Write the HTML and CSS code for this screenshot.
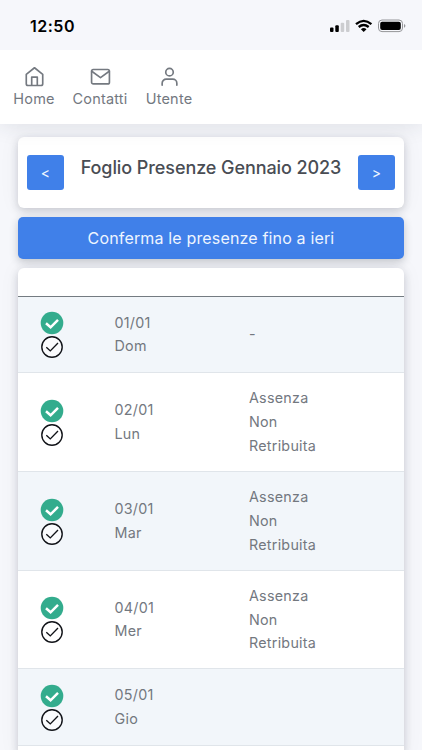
FILE: index.html
```
<!DOCTYPE html>
<html lang="it">
<head>
<meta charset="utf-8">
<meta name="viewport" content="width=device-width, initial-scale=1">
<title>Foglio Presenze</title>
<link rel="stylesheet" href="styles.css">
</head>
<body>
<svg class="defs" aria-hidden="true">
  <symbol id="done" viewBox="0 0 24 24"><circle cx="12" cy="12" r="11.3" fill="#33ac8d"/><path d="M6 12.300l4.600 4 7.400-7.400" fill="none" stroke="#fff" stroke-width="2.500"/></symbol>
  <symbol id="confirm" viewBox="0 0 24 24"><circle cx="12" cy="12" r="10.200" fill="#fff" fill-opacity=".6" stroke="#111318" stroke-width="1.400"/><path d="M6.300 12.200l4 3.700 7.700-7.800" fill="none" stroke="#111318" stroke-width="1.400"/></symbol>
</svg>
<div class="status">
  <span class="time">12:50</span>
  <svg class="signals" width="76" height="14" viewBox="0 0 76 14">
    <g fill="#000"><rect x="0" y="8.500" width="3.500" height="4.500" rx="1"/><rect x="5.300" y="6.300" width="3.500" height="6.700" rx="1"/></g>
    <g fill="#cccdd0"><rect x="10.700" y="3.700" width="3.500" height="9.300" rx="1"/><rect x="16" y="1" width="3.500" height="12" rx="1"/></g>
    <g fill="none" stroke="#000" stroke-width="2.300"><path d="M26 5.100Q33.700-1.400 41.400 5.100"/><path d="M28.700 8Q33.700 3.900 38.700 8"/></g>
    <path d="M30.900 10.200Q33.700 8 36.500 10.200L33.700 13z"/>
    <rect x="48.500" y="1" width="24" height="11.600" rx="3.500" fill="none" stroke="#949598"/>
    <rect x="50.200" y="2.700" width="20.600" height="8.200" rx="2"/>
    <path d="M74 5v3.700q1.400-.5 1.400-1.850T74 5z" fill="#949598"/>
  </svg>
</div>
<nav class="nav">
  <a class="nav-item home"><svg viewBox="0 0 24 24"><path d="M2.600 9.500 12 2l9.400 7.500V20.300a2 2 0 0 1-2 2H4.600a2 2 0 0 1-2-2zM8.800 22v-9.300h6.400V22"/></svg><span>Home</span></a>
  <a class="nav-item contatti"><svg viewBox="0 0 24 24"><rect x="1.800" y="4" width="20.400" height="16.500" rx="2"/><path d="M2 6 12 13.200 22 6"/></svg><span>Contatti</span></a>
  <a class="nav-item utente"><svg viewBox="0 0 24 24"><circle cx="12" cy="7" r="4.300"/><path d="M3.600 22v-2.300a4.700 4.700 0 0 1 4.700-4.700h7.400a4.700 4.700 0 0 1 4.700 4.700V22"/></svg><span>Utente</span></a>
</nav>
<main class="page">
  <section class="card month">
    <button class="step">&lt;</button>
    <h1><span>Foglio Presenze Gennaio 2023</span></h1>
    <button class="step">&gt;</button>
  </section>
  <button class="confirm"><span>Conferma le presenze fino a ieri</span></button>
  <section class="card days">
    <div class="head"></div>
    <div class="row short"><div class="icons"><svg><use href="#done"/></svg><svg><use href="#confirm"/></svg></div><div class="date">01/01<br>Dom</div><div class="kind">-</div></div>
    <div class="row"><div class="icons"><svg><use href="#done"/></svg><svg><use href="#confirm"/></svg></div><div class="date">02/01<br>Lun</div><div class="kind">Assenza<br>Non<br>Retribuita</div></div>
    <div class="row"><div class="icons"><svg><use href="#done"/></svg><svg><use href="#confirm"/></svg></div><div class="date">03/01<br>Mar</div><div class="kind">Assenza<br>Non<br>Retribuita</div></div>
    <div class="row"><div class="icons"><svg><use href="#done"/></svg><svg><use href="#confirm"/></svg></div><div class="date">04/01<br>Mer</div><div class="kind">Assenza<br>Non<br>Retribuita</div></div>
    <div class="row short"><div class="icons"><svg><use href="#done"/></svg><svg><use href="#confirm"/></svg></div><div class="date">05/01<br>Gio</div><div class="kind"></div></div>
    <div class="row last"></div>
  </section>
</main>
</body>
</html>
```
FILE: styles.css
```
* { box-sizing: border-box; }
html { height: 100%; overflow: hidden; }
body {
  margin: 0;
  height: 750px;
  overflow: hidden;
  display: flex;
  flex-direction: column;
  background: #f6f7fb;
  color: #73787f;
  font-family: Inter, "Liberation Sans", sans-serif;
}
.defs { display: none; }
.status {
  flex: none;
  height: 50px;
  padding: 2px 16px 0 30px;
  display: flex;
  align-items: center;
  justify-content: space-between;
}
.time { color: #000; font-size: 16px; font-weight: 600; letter-spacing: .5px; }
.signals { display: block; }
.nav {
  flex: none;
  height: 74px;
  padding: 16px 14px 0;
  display: flex;
  align-items: flex-start;
  gap: 18px;
  background: #fff;
  box-shadow: 0 2px 20px rgba(40, 45, 60, .11);
  clip-path: inset(0 0 -40px 0);
}
.nav-item { display: flex; flex-direction: column; align-items: center; font-size: 14.500px; line-height: 23px; letter-spacing: .2px; white-space: nowrap; }
.nav-item svg { width: 21px; height: 21px; fill: none; stroke: #747980; stroke-width: 1.900; stroke-linejoin: round; stroke-linecap: round; }
.home { width: 40px; }
.contatti { width: 56px; }
.utente { width: 46px; }
.page { flex: 1; min-height: 0; overflow: hidden; display: flex; flex-direction: column; gap: 9px; padding: 13px 18px 0; }
.card { flex: none; background: #fff; border-radius: 6px; box-shadow: 0 3px 9px rgba(35, 40, 55, .2), 0 0 22px rgba(35, 40, 55, .05); }
.month { height: 71px; padding: 18px 9px; display: flex; justify-content: space-between; }
button { font-family: inherit; border: 0; padding: 0; background: #4080e9; color: #eef5ff; }
.step { width: 37px; height: 35px; border-radius: 3px; font-size: 14px; }
h1 { margin: 0; color: #494d54; font-size: 18px; font-weight: 500; line-height: 25px; letter-spacing: -.08px; white-space: nowrap; }
.confirm { flex: none; height: 42px; border-radius: 5px; font-size: 16px; letter-spacing: .16px; box-shadow: 0 3px 8px rgba(35, 40, 55, .24); }
.days { overflow: hidden; }
.head { height: 28.500px; border-bottom: 1px solid #747b81; }
.row {
  height: 98.800px;
  display: grid;
  grid-template-columns: 96.500px 134.500px 1fr;
  align-items: center;
  border-bottom: 1px solid #e0e5ea;
  font-size: 14.300px;
  line-height: 23.700px;
  letter-spacing: .26px;
}
.row:nth-child(even) { background: #f2f6fa; }
.short { height: 76.500px; }
.last { height: 10px; border: 0; }
.icons { display: flex; flex-direction: column; padding: 2px 0 0 22px; }
.icons svg { width: 24px; height: 24px; }
```
